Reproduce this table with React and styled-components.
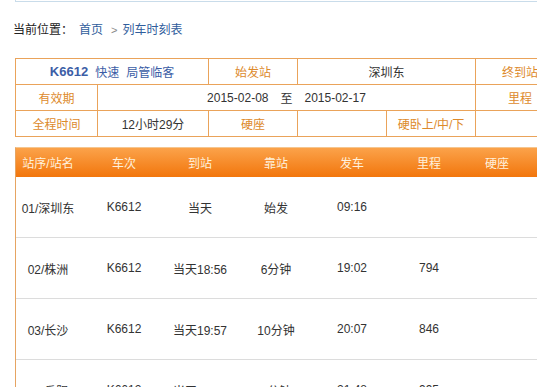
import React from "react";
import styled, { createGlobalStyle } from "styled-components";

const Global = createGlobalStyle`
  html, body { margin: 0; padding: 0; background: #fff; overflow: hidden; }
  body {
    font-family: "Liberation Sans", "Noto Sans CJK SC", sans-serif;
    font-size: 12px;
    color: #333;
  }
`;

const Page = styled.div`
  width: 537px;
  height: 387px;
  overflow: hidden;
`;

const TopRule = styled.div`
  margin-left: 15px;
  height: 2px;
  box-sizing: border-box;
  border-left: 1px solid #c9dcea;
  border-bottom: 1px solid #c9dcea;
`;

const Crumbs = styled.div`
  margin-top: 18px;
  padding-left: 13px;
  height: 20px;
  line-height: 20px;
  display: flex;
  align-items: center;
  white-space: nowrap;
`;

const CrumbLabel = styled.span`
  color: #222;
  margin-right: 6px;
`;

const CrumbLink = styled.a`
  color: #2f5d9c;
  text-decoration: none;
`;

const CrumbSep = styled.span`
  color: #888;
  margin: 0 5px 0 8px;
  font-size: 11px;
`;

const InfoGrid = styled.div`
  margin: 18px 0 0 15px;
  width: 549px;
  display: grid;
  grid-template-columns: 82px 111px 89px 89px 89px 89px;
  grid-auto-rows: 26px;
  border-left: 1px solid #eaa35a;
  border-top: 1px solid #eaa35a;
  box-sizing: content-box;
`;

const Cell = styled.div`
  grid-column: span ${(p) => p.$span || 1};
  box-sizing: border-box;
  border-right: 1px solid #eaa35a;
  border-bottom: 1px solid #eaa35a;
  display: flex;
  align-items: center;
  justify-content: center;
  white-space: nowrap;
  color: ${(p) => (p.$label ? "#dd8a2c" : "#333")};
`;

const TrainNo = styled.b`
  color: #3c5ea6;
  font-weight: bold;
  font-size: 13px;
`;

const TrainTag = styled.span`
  color: #3c5ea6;
  margin-left: 7px;
`;

const DateTo = styled.span`
  margin: 0 12px;
`;

const Schedule = styled.div`
  margin: 10px 0 0 15px;
  width: 560px;
  border-left: 1px solid #e6a462;
  border-top: 1px solid #f5c690;
`;

const HeadRow = styled.div`
  display: grid;
  grid-template-columns: 64px 88px 64px 88px 64px 90px 46px 1fr;
  height: 29px;
  background: linear-gradient(#fba24a, #f2760c);
  color: #fff1dc;
`;

const Row = styled.div`
  display: grid;
  grid-template-columns: 64px 88px 64px 88px 64px 90px 46px 1fr;
  height: 61px;
  box-sizing: border-box;
  border-bottom: 1px solid #dcdcdc;
`;

const Col = styled.div`
  display: flex;
  align-items: center;
  justify-content: center;
  white-space: nowrap;
`;

const headers = ["站序/站名", "车次", "到站", "靠站", "发车", "里程", "硬座", ""];

const rows = [
  ["01/深圳东", "K6612", "当天", "始发", "09:16", "", "", ""],
  ["02/株洲", "K6612", "当天18:56", "6分钟", "19:02", "794", "", ""],
  ["03/长沙", "K6612", "当天19:57", "10分钟", "20:07", "846", "", ""],
  ["04/岳阳", "K6612", "当天21:45", "3分钟", "21:48", "995", "", ""],
];

export default function App() {
  return (
    <Page>
      <Global />
      <TopRule />
      <Crumbs>
        <CrumbLabel>当前位置：</CrumbLabel>
        <CrumbLink href="#">首页</CrumbLink>
        <CrumbSep>&gt;</CrumbSep>
        <CrumbLink href="#">列车时刻表</CrumbLink>
      </Crumbs>

      <InfoGrid>
        <Cell $span={2}>
          <TrainNo>K6612</TrainNo>
          <TrainTag>快速</TrainTag>
          <TrainTag>局管临客</TrainTag>
        </Cell>
        <Cell $label>始发站</Cell>
        <Cell $span={2}>深圳东</Cell>
        <Cell $label>终到站</Cell>

        <Cell $label>有效期</Cell>
        <Cell $span={4}>
          2015-02-08<DateTo>至</DateTo>2015-02-17
        </Cell>
        <Cell $label>里程</Cell>

        <Cell $label>全程时间</Cell>
        <Cell>12小时29分</Cell>
        <Cell $label>硬座</Cell>
        <Cell />
        <Cell $label>硬卧上/中/下</Cell>
        <Cell />
      </InfoGrid>

      <Schedule>
        <HeadRow>
          {headers.map((h, i) => (
            <Col key={i}>{h}</Col>
          ))}
        </HeadRow>
        {rows.map((r, i) => (
          <Row key={i}>
            {r.map((c, j) => (
              <Col key={j}>{c}</Col>
            ))}
          </Row>
        ))}
      </Schedule>
    </Page>
  );
}
